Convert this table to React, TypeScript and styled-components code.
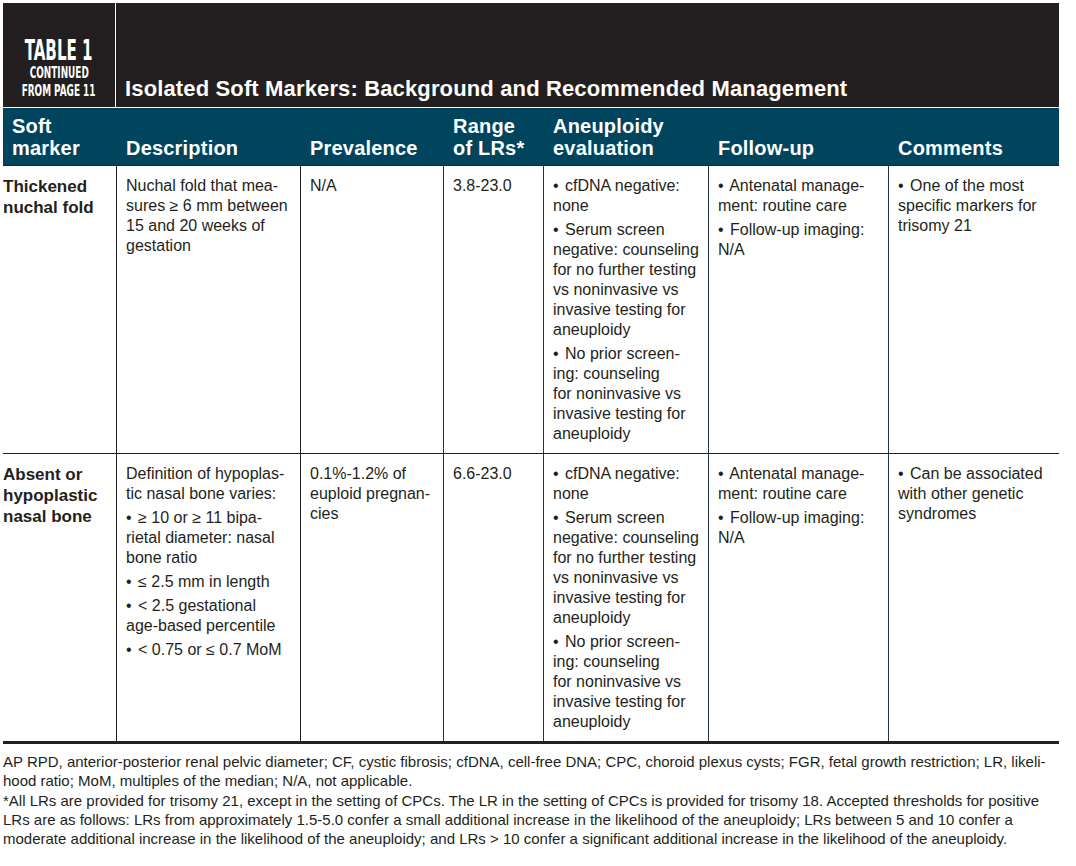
import styled, { createGlobalStyle } from 'styled-components';

const GlobalStyle = createGlobalStyle`
	html, body {
		margin: 0;
		padding: 0;
		background: #ffffff;
	}
	body {
		font-family: 'Liberation Sans', Arial, sans-serif;
		color: #231f20;
	}
`;

const COLUMNS = '113px 184px 143px 100px 165px 180px 171px';

const Page = styled.div`
	width: 1056px;
	padding: 3px 0 0 3px;
`;

const TopBar = styled.header`
	display: flex;
	height: 104px;
	background: #231f20;
	border-bottom: 1px solid #ffffff;
`;

const LabelBox = styled.div`
	width: 113px;
	border-right: 1px solid #ffffff;
	display: flex;
	flex-direction: column;
	justify-content: flex-end;
	align-items: center;
	padding-bottom: 7px;
	box-sizing: border-box;
	color: #ffffff;
	font-family: 'DejaVu Sans Condensed', 'DejaVu Sans', sans-serif;
	font-weight: bold;
`;

const LabelLine = styled.div<{ size: number; lh: number }>`
	font-size: ${({ size }) => size}px;
	line-height: ${({ lh }) => lh}px;
	white-space: nowrap;
	transform: scaleX(0.6);
	transform-origin: center;
`;

const Title = styled.h1`
	flex: 1;
	margin: 0;
	padding: 0 0 5px 9px;
	align-self: flex-end;
	color: #ffffff;
	font-size: 22px;
	line-height: 26px;
	letter-spacing: 0.14px;
	font-weight: bold;
	white-space: nowrap;
`;

const Row = styled.div`
	display: grid;
	grid-template-columns: ${COLUMNS};
`;

const HeadRow = styled(Row)`
	background: #00455d;
	border-bottom: 1px solid #1c2226;
`;

const HeadCell = styled.div<{ first?: boolean }>`
	align-self: end;
	padding: 7px 0 6px ${({ first }) => (first ? 9 : 10)}px;
	color: #ffffff;
	font-size: 20px;
	line-height: 22px;
	letter-spacing: 0.2px;
	font-weight: bold;
	white-space: nowrap;
`;

const BodyRow = styled(Row)<{ last?: boolean }>`
	border-bottom: ${({ last }) => (last ? '3px solid #231f20' : '1px solid #231f20')};
`;

const Cell = styled.div<{ first?: boolean; line?: string }>`
	padding: 10px 0 9px ${({ first }) => (first ? 0 : 9)}px;
	border-left: ${({ first, line }) => (first ? 'none' : `1px solid ${line || '#1e3442'}`)};
	font-size: 16px;
	line-height: 20px;
	white-space: nowrap;
`;

const MarkerName = styled.div`
	font-size: 17px;
	line-height: 21px;
	font-weight: bold;
`;

const Item = styled.div`
	& + & {
		margin-top: 4px;
	}
`;

const Bullet = styled.span`
	margin-right: 2px;
`;

const Footnotes = styled.div`
	margin-top: 8px;
	font-size: 15px;
	line-height: 19px;
	color: #231f20;
	white-space: nowrap;
`;

const Note = styled.p`
	margin: 0;
	& + & {
		margin-top: 1px;
	}
`;

const Lines = ({ lines }: { lines: string[] }) => (
	<>
		{lines.map((l, i) => {
			const bulleted = l.startsWith('\u2022 ');
			return (
				<span key={i}>
					{bulleted ? (
						<>
							<Bullet>{'\u2022'}</Bullet> {l.slice(2)}
						</>
					) : (
						l
					)}
					{i < lines.length - 1 && <br />}
				</span>
			);
		})}
	</>
);

const Items = ({ items }: { items: string[][] }) => (
	<>
		{items.map((lines, i) => (
			<Item key={i}>
				<Lines lines={lines} />
			</Item>
		))}
	</>
);

const evaluation = [
	['\u2022 cfDNA negative:', 'none'],
	[
		'\u2022 Serum screen',
		'negative: counseling',
		'for no further testing',
		'vs noninvasive vs',
		'invasive testing for',
		'aneuploidy',
	],
	['\u2022 No prior screen-', 'ing: counseling', 'for noninvasive vs', 'invasive testing for', 'aneuploidy'],
];

const followUp = [
	['\u2022 Antenatal manage-', 'ment: routine care'],
	['\u2022 Follow-up imaging:', 'N/A'],
];

const rows = [
	{
		marker: ['Thickened', 'nuchal fold'],
		description: [['Nuchal fold that mea-', 'sures \u2265 6 mm between', '15 and 20 weeks of', 'gestation']],
		prevalence: ['N/A'],
		range: '3.8-23.0',
		comments: [['\u2022 One of the most', 'specific markers for', 'trisomy 21']],
	},
	{
		marker: ['Absent or', 'hypoplastic', 'nasal bone'],
		description: [
			['Definition of hypoplas-', 'tic nasal bone varies:'],
			['\u2022 \u2265 10 or \u2265 11 bipa-', 'rietal diameter: nasal', 'bone ratio'],
			['\u2022 \u2264 2.5 mm in length'],
			['\u2022 < 2.5 gestational', 'age-based percentile'],
			['\u2022 < 0.75 or \u2264 0.7 MoM'],
		],
		prevalence: ['0.1%-1.2% of', 'euploid pregnan-', 'cies'],
		range: '6.6-23.0',
		comments: [['\u2022 Can be associated', 'with other genetic', 'syndromes']],
	},
];

const App = () => {
	return (
		<Page>
			<GlobalStyle />
			<TopBar>
				<LabelBox>
					<LabelLine size={28} lh={27}>
						TABLE 1
					</LabelLine>
					<LabelLine size={16.5} lh={18}>
						CONTINUED
					</LabelLine>
					<LabelLine size={16.5} lh={18}>
						FROM PAGE 11
					</LabelLine>
				</LabelBox>
				<Title>Isolated Soft Markers: Background and Recommended Management</Title>
			</TopBar>

			<HeadRow>
				<HeadCell first>
					Soft
					<br />
					marker
				</HeadCell>
				<HeadCell>Description</HeadCell>
				<HeadCell>Prevalence</HeadCell>
				<HeadCell>
					Range
					<br />
					of LRs*
				</HeadCell>
				<HeadCell>
					Aneuploidy
					<br />
					evaluation
				</HeadCell>
				<HeadCell>Follow-up</HeadCell>
				<HeadCell>Comments</HeadCell>
			</HeadRow>

			{rows.map((r, i) => (
				<BodyRow key={i} last={i === rows.length - 1}>
					<Cell first>
						<MarkerName>
							<Lines lines={r.marker} />
						</MarkerName>
					</Cell>
					<Cell line='#231f20'>
						<Items items={r.description} />
					</Cell>
					<Cell line='#231f20'>
						<Lines lines={r.prevalence} />
					</Cell>
					<Cell>{r.range}</Cell>
					<Cell>
						<Items items={evaluation} />
					</Cell>
					<Cell>
						<Items items={followUp} />
					</Cell>
					<Cell>
						<Items items={r.comments} />
					</Cell>
				</BodyRow>
			))}

			<Footnotes>
				<Note>
					AP RPD, anterior-posterior renal pelvic diameter; CF, cystic fibrosis; cfDNA, cell-free DNA; CPC, choroid
					plexus cysts; FGR, fetal growth restriction; LR, likeli-
					<br />
					hood ratio; MoM, multiples of the median; N/A, not applicable.
				</Note>
				<Note>
					*All LRs are provided for trisomy 21, except in the setting of CPCs. The LR in the setting of CPCs is provided
					for trisomy 18. Accepted thresholds for positive
					<br />
					LRs are as follows: LRs from approximately 1.5-5.0 confer a small additional increase in the likelihood of
					the aneuploidy; LRs between 5 and 10 confer a
					<br />
					moderate additional increase in the likelihood of the aneuploidy; and LRs &gt; 10 confer a significant
					additional increase in the likelihood of the aneuploidy.
				</Note>
			</Footnotes>
		</Page>
	);
};

export default App;
